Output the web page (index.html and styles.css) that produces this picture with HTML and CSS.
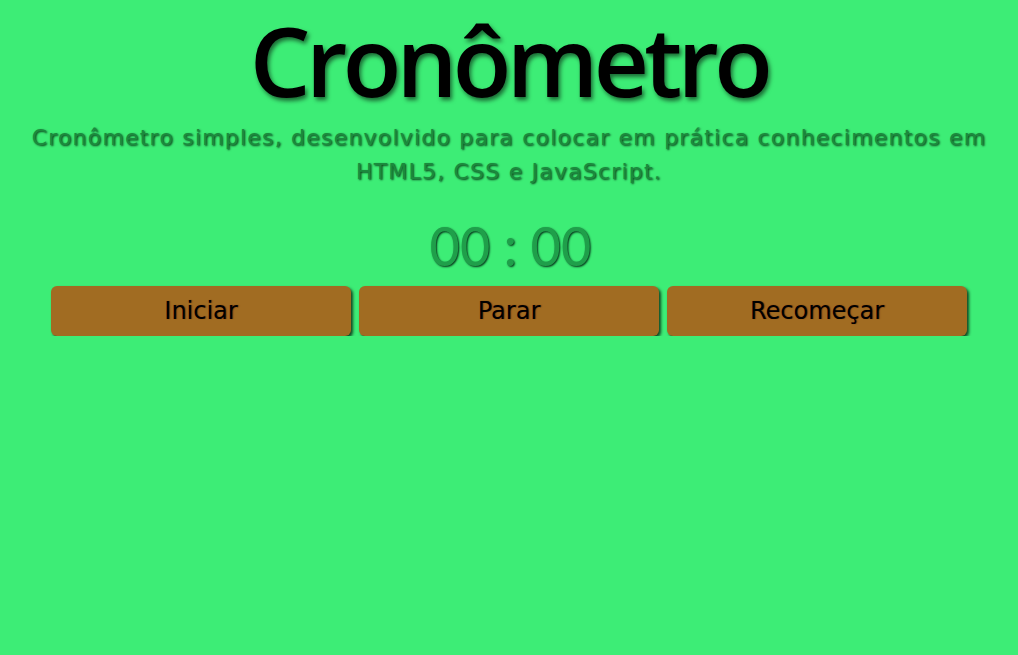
FILE: index.html
```html
<!DOCTYPE html>
<html lang="pt-BR">
<head>
<meta charset="utf-8">
<title>Cronômetro</title>
<link rel="stylesheet" href="styles.css">
</head>
<body>
<main class="app">
  <h1 class="title">Cronômetro</h1>
  <p class="desc">Cronômetro simples, desenvolvido para colocar em prática conhecimentos em HTML5, CSS e JavaScript.</p>
  <div class="timer">00 : 00</div>
  <div class="controls">
    <button class="btn">Iniciar</button>
    <button class="btn">Parar</button>
    <button class="btn">Recomeçar</button>
  </div>
</main>
</body>
</html>
```
FILE: styles.css
```css
html, body {
  margin: 0;
  padding: 0;
  background: #3ded76;
}
body {
  font-family: "DejaVu Sans", "Noto Sans", sans-serif;
}
.app {
  display: flex;
  flex-direction: column;
  align-items: center;
  padding: 0 8px;
  text-align: center;
}
.title {
  margin: -6px 0 0;
  padding: 0 8px;
  font-family: "Open Sans", sans-serif;
  font-weight: 600;
  font-size: 96px;
  line-height: normal;
  letter-spacing: -4.7px;
  color: #000;
  text-shadow: 2px 3px 4px rgba(0, 0, 0, 0.55);
}
.desc {
  margin: -4px 0 0;
  font-size: 22px;
  line-height: 34px;
  letter-spacing: 1.2px;
  color: #1b8a3d;
  text-shadow: 1px 1px 2px #0a3a18;
}
.timer {
  margin-top: 30px;
  font-family: Inter, "DejaVu Sans", sans-serif;
  font-size: 53px;
  line-height: 56px;
  letter-spacing: -3px;
  word-spacing: 2px;
  color: #1f9f4a;
  text-shadow: 1px 1px 2px #06321a;
}
.controls {
  display: flex;
  gap: 8px;
  margin-top: 11px;
}
.btn {
  width: 300px;
  height: 50px;
  border: none;
  border-radius: 6px;
  background: #a16c22;
  color: #000;
  font-family: "DejaVu Sans", sans-serif;
  font-size: 24px;
  box-shadow: 2px 2px 3px rgba(0, 0, 0, 0.7);
  text-shadow: 1px 0 1px rgba(80, 0, 0, 0.5);
  cursor: pointer;
}
```
